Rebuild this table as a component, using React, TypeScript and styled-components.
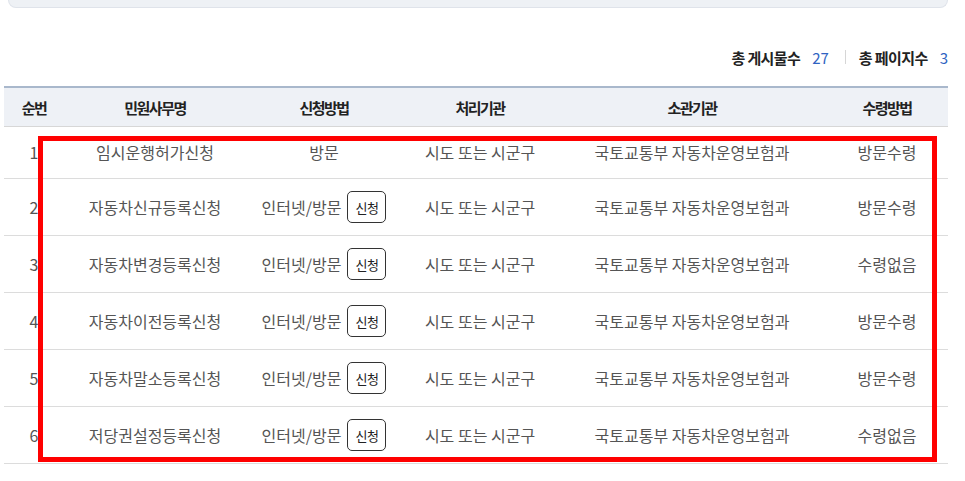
import React from 'react';
import styled, { createGlobalStyle } from 'styled-components';

const GlobalStyle = createGlobalStyle`
  body {
    margin: 0;
    background: #fff;
    font-family: 'Noto Sans CJK KR', 'Noto Sans', sans-serif;
    color: #555;
  }
`;

const Page = styled.div`
  width: 965px;
  padding: 0 17px 0 4px;
  box-sizing: border-box;
`;

const SearchBox = styled.div`
  height: 7px;
  margin-left: 4px;
  background: #eef1f5;
  border: 1px solid #dfe3ea;
  border-top: none;
  border-radius: 0 0 10px 10px;
`;

const Summary = styled.div`
  display: flex;
  justify-content: flex-end;
  align-items: center;
  height: 26px;
  margin-top: 36px;
  font-size: 15px;
`;

const SummaryItem = styled.div`
  display: flex;
  align-items: center;
  gap: 12px;
`;

const SummaryLabel = styled.span`
  font-weight: 700;
  color: #222;
  letter-spacing: -0.6px;
`;

const SummaryValue = styled.span`
  color: #2f63c2;
`;

const Divider = styled.span`
  width: 1px;
  height: 14px;
  background: #d6d6d6;
  margin: 0 13px 0 16px;
`;

const TableWrap = styled.div`
  position: relative;
  margin-top: 16px;
`;

const Table = styled.table`
  width: 944px;
  border-collapse: collapse;
  table-layout: fixed;
  border-top: 2px solid #a9b8cc;
`;

const HeadCell = styled.th`
  height: 38px;
  padding: 0;
  background: #eef1f6;
  border-bottom: 1px solid #d7d7d7;
  font-size: 15px;
  font-weight: 700;
  color: #222;
  letter-spacing: -1.5px;
  text-align: center;
`;

const Cell = styled.td`
  padding: 12px 0;
  line-height: 27px;
  border-bottom: 1px solid #dcdcdc;
  font-size: 16px;
  color: #555;
  text-align: center;
  white-space: nowrap;
`;

const Method = styled.span`
  display: inline-flex;
  align-items: center;
  gap: 6px;
  vertical-align: middle;
`;

const ApplyButton = styled.button`
  width: 39px;
  height: 32px;
  padding: 0;
  border: 1px solid #333;
  border-radius: 5px;
  background: #fff;
  font-family: inherit;
  font-size: 13px;
  font-weight: 400;
  color: #222;
  letter-spacing: -0.5px;
  cursor: pointer;
`;

const Highlight = styled.div`
  position: absolute;
  left: 34px;
  top: 50px;
  width: 899px;
  height: 326px;
  border: 5px solid #ff0000;
  box-sizing: border-box;
  pointer-events: none;
`;

type Row = {
  no: number;
  name: string;
  online: boolean;
  receive: string;
};

const rows: Row[] = [
  { no: 1, name: '임시운행허가신청', online: false, receive: '방문수령' },
  { no: 2, name: '자동차신규등록신청', online: true, receive: '방문수령' },
  { no: 3, name: '자동차변경등록신청', online: true, receive: '수령없음' },
  { no: 4, name: '자동차이전등록신청', online: true, receive: '방문수령' },
  { no: 5, name: '자동차말소등록신청', online: true, receive: '방문수령' },
  { no: 6, name: '저당권설정등록신청', online: true, receive: '수령없음' },
  { no: 7, name: '자동차압류등록신청', online: false, receive: '방문수령' },
];

const columns = [
  { title: '순번', width: 60 },
  { title: '민원사무명', width: 182 },
  { title: '신청방법', width: 156 },
  { title: '처리기관', width: 156 },
  { title: '소관기관', width: 268 },
  { title: '수령방법', width: 122 },
];

const App: React.FC = () => {
  return (
    <Page>
      <GlobalStyle />
      <SearchBox />

      <Summary>
        <SummaryItem>
          <SummaryLabel>총 게시물수</SummaryLabel>
          <SummaryValue>27</SummaryValue>
        </SummaryItem>
        <Divider />
        <SummaryItem>
          <SummaryLabel>총 페이지수</SummaryLabel>
          <SummaryValue>3</SummaryValue>
        </SummaryItem>
      </Summary>

      <TableWrap>
        <Table>
          <colgroup>
            {columns.map(col => (
              <col key={col.title} style={{ width: col.width }} />
            ))}
          </colgroup>
          <thead>
            <tr>
              {columns.map(col => (
                <HeadCell key={col.title}>{col.title}</HeadCell>
              ))}
            </tr>
          </thead>
          <tbody>
            {rows.map(row => (
              <tr key={row.no}>
                <Cell>{row.no}</Cell>
                <Cell>{row.name}</Cell>
                <Cell>
                  {row.online ? (
                    <Method>
                      인터넷/방문
                      <ApplyButton>신청</ApplyButton>
                    </Method>
                  ) : (
                    '방문'
                  )}
                </Cell>
                <Cell>시도 또는 시군구</Cell>
                <Cell>국토교통부 자동차운영보험과</Cell>
                <Cell>{row.receive}</Cell>
              </tr>
            ))}
          </tbody>
        </Table>
        <Highlight />
      </TableWrap>
    </Page>
  );
};

export default App;
